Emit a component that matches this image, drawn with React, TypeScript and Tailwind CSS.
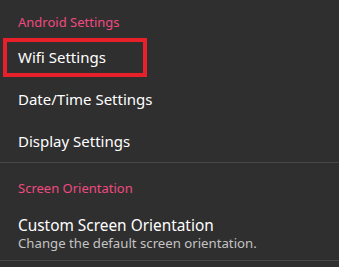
export default function App() {
  return (
    <div
      className="w-[339px] h-[267px] bg-[#2f2f2f] overflow-hidden"
      style={{ fontFamily: '"Noto Sans", "Open Sans", sans-serif' }}
    >
      <div className="pt-[14px] h-[36px] pl-[18px] text-[13px] leading-[16px] text-[#f04a80]">
        Android Settings
      </div>
      <div className="relative h-[42px] flex items-center pl-[18px] text-[15px] text-white">
        Wifi Settings
        <div className="absolute left-[3px] top-[2px] w-[144px] h-[39px] border-4 border-[#e8202a]" />
      </div>
      <div className="h-[42px] flex items-center pl-[18px] text-[15px] text-white">
        Date/Time Settings
      </div>
      <div className="h-[42px] flex items-center pl-[18px] text-[15px] text-white">
        Display Settings
      </div>
      <div className="h-px bg-[#484848]" />
      <div className="pt-[17px] h-[45px] pl-[18px] text-[13px] leading-[16px] text-[#f04a80]">
        Screen Orientation
      </div>
      <div className="h-[52px] flex flex-col justify-center pl-[18px]">
        <div className="text-[15.4px] leading-[18px] text-white">Custom Screen Orientation</div>
        <div className="text-[13.2px] leading-[17px] text-[#c4c4c4]">
          Change the default screen orientation.
        </div>
      </div>
      <div className="h-px bg-[#484848]" />
    </div>
  );
}
